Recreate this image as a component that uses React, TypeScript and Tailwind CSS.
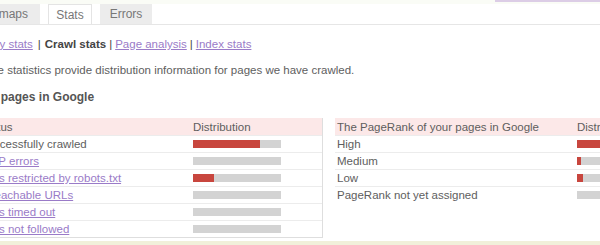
const leftRows = [
  { label: "Successfully crawled", link: false, pct: 76 },
  { label: "HTTP errors", link: true, pct: 0 },
  { label: "URLs restricted by robots.txt", link: true, pct: 24 },
  { label: "Unreachable URLs", link: true, pct: 0 },
  { label: "URLs timed out", link: true, pct: 0 },
  { label: "URLs not followed", link: true, pct: 0 },
];

const rightRows = [
  { label: "High", pct: 80 },
  { label: "Medium", pct: 4 },
  { label: "Low", pct: 7 },
  { label: "PageRank not yet assigned", pct: 0 },
];

const Bar = ({ pct }: { pct: number }) => (
  <div className="h-[8px] w-[88px] bg-[#d3d3d3]">
    <div className="h-full bg-[#c8463e]" style={{ width: `${pct}%` }} />
  </div>
);

const Tab = ({ label, active, className }: { label: string; active?: boolean; className: string }) => (
  <div
    className={
      active
        ? `flex h-[20px] items-center border border-b-0 border-[#e4e4e4] bg-white ${className}`
        : `flex h-[20px] items-center bg-[#ececec] ${className}`
    }
  >
    {label}
  </div>
);

export default function App() {
  return (
    <div className="flex h-[245px] w-[600px] flex-col overflow-hidden bg-white font-['Liberation_Sans',Arial,sans-serif] text-[11.5px] leading-[16px] text-[#5e5e5e]">
      <div className="flex h-[4px] justify-end bg-[#fafcf6]">
        <div className="h-[2px] w-[105px] bg-[#dccde6]" />
      </div>

      <div className="-ml-[28px] flex items-end gap-[8px] border-b border-[#e6e6e6] text-[12px] text-[#777]">
        <Tab label="Sitemaps" className="w-[68px] justify-end pr-[12px]" />
        <Tab label="Stats" active className="w-[44px] justify-center" />
        <Tab label="Errors" className="w-[52px] justify-center" />
      </div>

      <div className="-ml-[26px] flex flex-col">
        <div className="mt-[11px] flex items-center whitespace-nowrap">
          <a className="text-[#9a7bc8] underline">Query stats</a>
          <span className="pl-[5px] pr-[4px] text-[#444]">|</span>
          <span className="font-bold text-[#444]">Crawl stats</span>
          <span className="px-[3px] text-[#444]">|</span>
          <a className="text-[#9a7bc8] underline">Page analysis</a>
          <span className="px-[3px] text-[#444]">|</span>
          <a className="text-[#9a7bc8] underline">Index stats</a>
        </div>

        <p className="-ml-[2px] mt-[10px] whitespace-nowrap">
          These statistics provide distribution information for pages we have crawled.
        </p>

        <h2 className="-ml-[3px] mt-[11px] whitespace-nowrap text-[12px] font-bold text-[#555]">Your pages in Google</h2>

        <div className="mt-[13px] flex items-start gap-[12px]">
          <div className="w-[349px] shrink-0 border-r border-b border-[#dedede]">
            <div className="flex h-[17px] items-center bg-[#fce8e8] pl-[2px]">
              <span className="w-[217px] pl-[4px]">Status</span>
              <span>Distribution</span>
            </div>
            {leftRows.map((row) => (
              <div key={row.label} className="flex h-[17px] items-center border-t border-[#ececec] pl-[2px]">
                <span className={row.link ? "w-[217px] text-[#9a7bc8] underline" : "w-[217px] pl-[4px]"}>{row.label}</span>
                <Bar pct={row.pct} />
              </div>
            ))}
          </div>

          <div className="w-[400px] shrink-0">
            <div className="flex h-[17px] items-center bg-[#fce8e8] pl-[2px]">
              <span className="w-[240px]">The PageRank of your pages in Google</span>
              <span>Distribution</span>
            </div>
            {rightRows.map((row) => (
              <div key={row.label} className="flex h-[17px] items-center border-t border-[#ececec] pl-[2px]">
                <span className="w-[240px]">{row.label}</span>
                <Bar pct={row.pct} />
              </div>
            ))}
          </div>
        </div>
      </div>

      <div className="mt-auto h-[4px] bg-[#f1f0da]" />
    </div>
  );
}
